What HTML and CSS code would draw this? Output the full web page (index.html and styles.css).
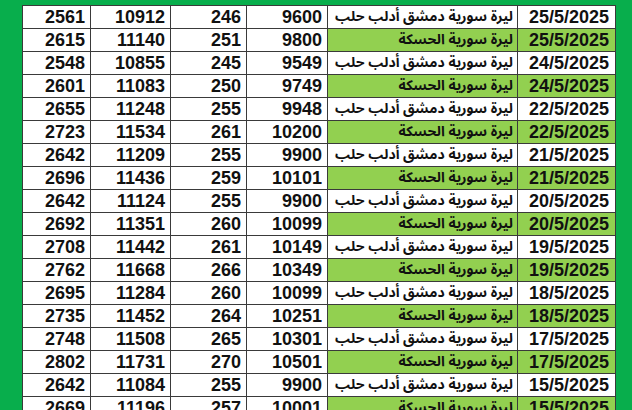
FILE: index.html
```html
<!DOCTYPE html>
<html lang="ar">
<head>
<meta charset="utf-8">
<title>أسعار</title>
<link rel="stylesheet" href="styles.css">
</head>
<body>
<div class="sheet">
<table class="prices">
<colgroup>
<col class="c1"><col class="c2"><col class="c3"><col class="c4"><col class="c5"><col class="c6">
</colgroup>
<tbody>
<tr><td>2561</td><td>10912</td><td>246</td><td>9600</td><td class="ar" dir="rtl">ليرة سورية دمشق أدلب حلب</td><td class="date">25/5/2025</td></tr>
<tr class="hs"><td>2615</td><td>11140</td><td>251</td><td>9800</td><td class="ar" dir="rtl">ليرة سورية الحسكة</td><td class="date">25/5/2025</td></tr>
<tr><td>2548</td><td>10855</td><td>245</td><td>9549</td><td class="ar" dir="rtl">ليرة سورية دمشق أدلب حلب</td><td class="date">24/5/2025</td></tr>
<tr class="hs"><td>2601</td><td>11083</td><td>250</td><td>9749</td><td class="ar" dir="rtl">ليرة سورية الحسكة</td><td class="date">24/5/2025</td></tr>
<tr><td>2655</td><td>11248</td><td>255</td><td>9948</td><td class="ar" dir="rtl">ليرة سورية دمشق أدلب حلب</td><td class="date">22/5/2025</td></tr>
<tr class="hs"><td>2723</td><td>11534</td><td>261</td><td>10200</td><td class="ar" dir="rtl">ليرة سورية الحسكة</td><td class="date">22/5/2025</td></tr>
<tr><td>2642</td><td>11209</td><td>255</td><td>9900</td><td class="ar" dir="rtl">ليرة سورية دمشق أدلب حلب</td><td class="date">21/5/2025</td></tr>
<tr class="hs"><td>2696</td><td>11436</td><td>259</td><td>10101</td><td class="ar" dir="rtl">ليرة سورية الحسكة</td><td class="date">21/5/2025</td></tr>
<tr><td>2642</td><td>11124</td><td>255</td><td>9900</td><td class="ar" dir="rtl">ليرة سورية دمشق أدلب حلب</td><td class="date">20/5/2025</td></tr>
<tr class="hs"><td>2692</td><td>11351</td><td>260</td><td>10099</td><td class="ar" dir="rtl">ليرة سورية الحسكة</td><td class="date">20/5/2025</td></tr>
<tr><td>2708</td><td>11442</td><td>261</td><td>10149</td><td class="ar" dir="rtl">ليرة سورية دمشق أدلب حلب</td><td class="date">19/5/2025</td></tr>
<tr class="hs"><td>2762</td><td>11668</td><td>266</td><td>10349</td><td class="ar" dir="rtl">ليرة سورية الحسكة</td><td class="date">19/5/2025</td></tr>
<tr><td>2695</td><td>11284</td><td>260</td><td>10099</td><td class="ar" dir="rtl">ليرة سورية دمشق أدلب حلب</td><td class="date">18/5/2025</td></tr>
<tr class="hs"><td>2735</td><td>11452</td><td>264</td><td>10251</td><td class="ar" dir="rtl">ليرة سورية الحسكة</td><td class="date">18/5/2025</td></tr>
<tr><td>2748</td><td>11508</td><td>265</td><td>10301</td><td class="ar" dir="rtl">ليرة سورية دمشق أدلب حلب</td><td class="date">17/5/2025</td></tr>
<tr class="hs"><td>2802</td><td>11731</td><td>270</td><td>10501</td><td class="ar" dir="rtl">ليرة سورية الحسكة</td><td class="date">17/5/2025</td></tr>
<tr><td>2642</td><td>11084</td><td>255</td><td>9900</td><td class="ar" dir="rtl">ليرة سورية دمشق أدلب حلب</td><td class="date">15/5/2025</td></tr>
<tr class="hs"><td>2669</td><td>11196</td><td>257</td><td>10001</td><td class="ar" dir="rtl">ليرة سورية الحسكة</td><td class="date">15/5/2025</td></tr>
</tbody>
</table>
</div>
</body>
</html>
```

FILE: styles.css
```css
html, body {
  margin: 0;
  padding: 0;
  background: #08ae4c;
  overflow: hidden;
}
.sheet {
  padding: 5px 0 0 22px;
}
.prices {
  border-collapse: collapse;
  table-layout: fixed;
  width: 593px;
  background: #ffffff;
  font-family: "Liberation Sans", Arial, sans-serif;
  font-weight: bold;
  font-size: 18px;
  color: #111111;
}
.c1 { width: 68px; }
.c2 { width: 80px; }
.c3 { width: 76px; }
.c4 { width: 81px; }
.c5 { width: 190px; }
.c6 { width: 98px; }
.prices td {
  border: 1px solid #3a3a3a;
  height: 22px;
  padding: 0 5px 0 0;
  text-align: right;
  line-height: 22px;
  white-space: nowrap;
  overflow: hidden;
  box-sizing: border-box;
}
.prices td.ar {
  font-family: "Noto Sans Arabic", "Noto Naskh Arabic", "DejaVu Sans", sans-serif;
  font-size: 14px;
  line-height: 22px;
  text-align: right;
  padding: 0 4px 0 0;
}
.prices td.date {
  padding-right: 6px;
}
.prices tr.hs td.ar,
.prices tr.hs td.date {
  background: #92d050;
}
```
